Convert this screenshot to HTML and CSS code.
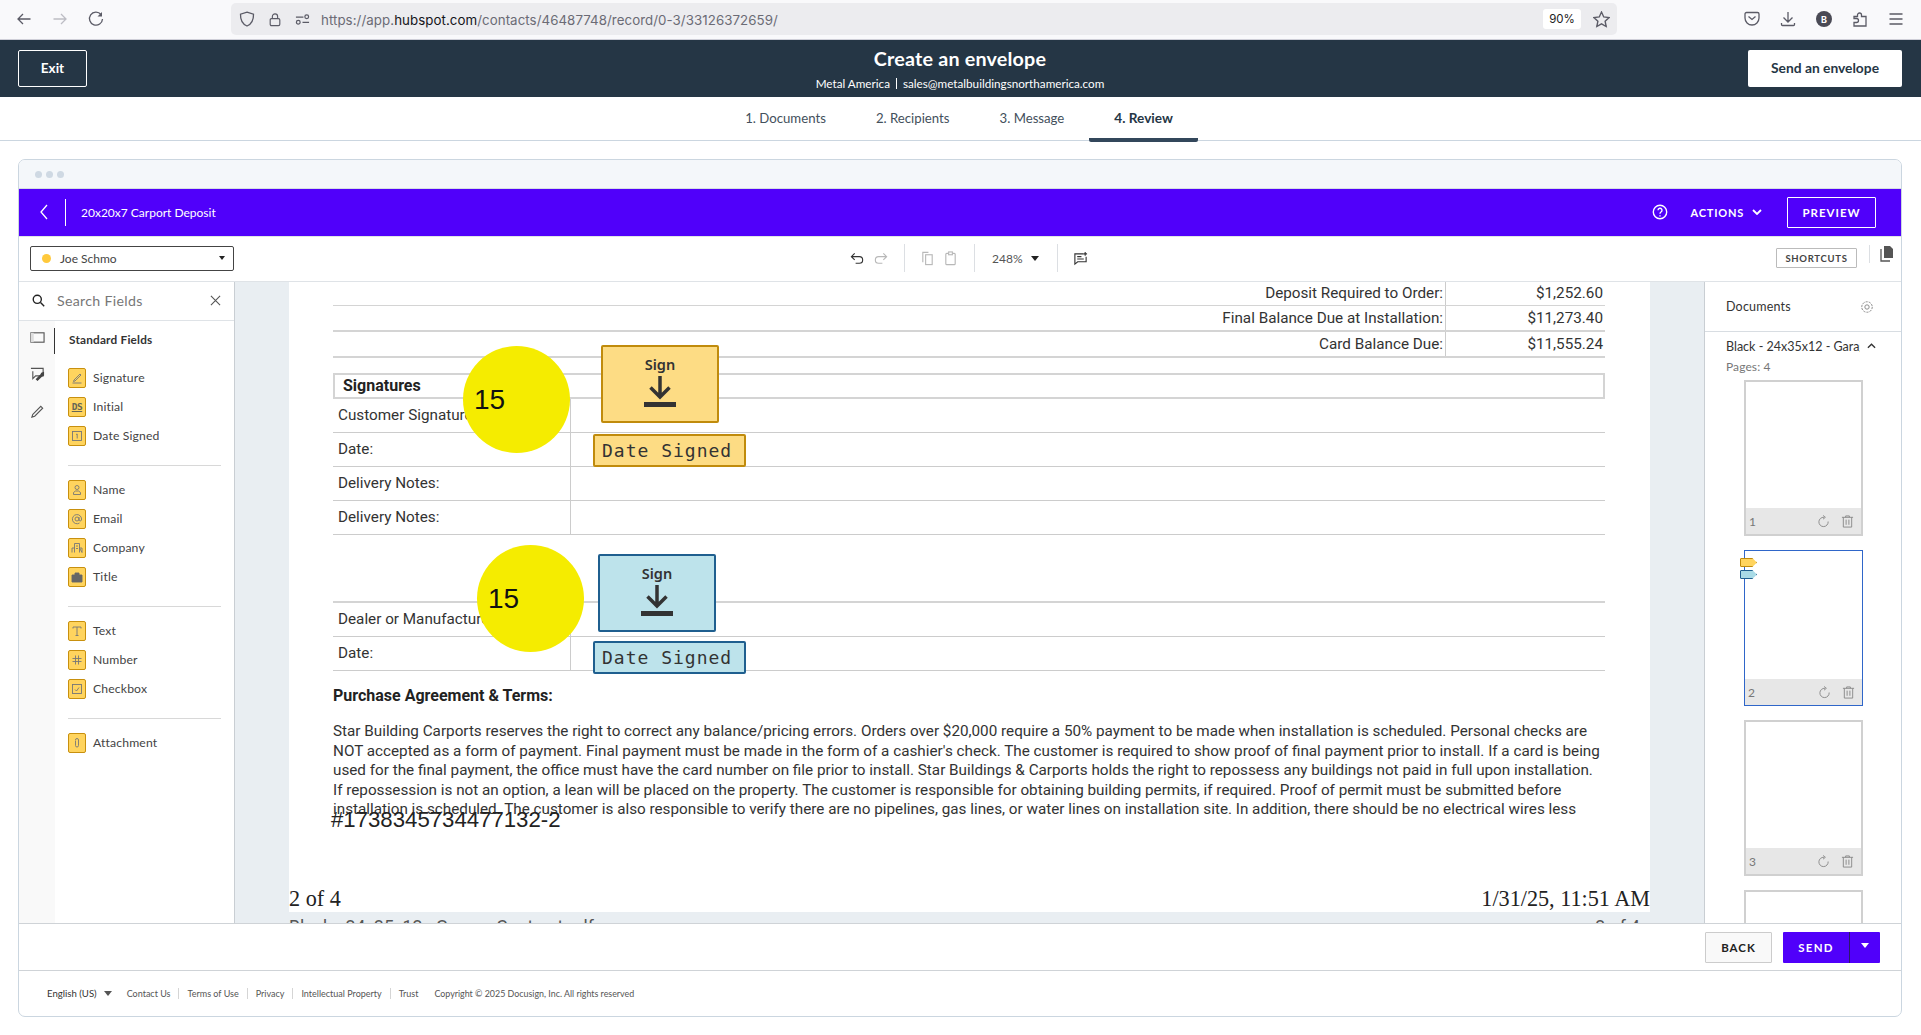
FILE: index.html
```html
<!DOCTYPE html>
<html lang="en">
<head>
<meta charset="utf-8">
<title>Create an envelope</title>
<link rel="stylesheet" href="styles.css">
</head>
<body>
<div class="browser">
  <div class="nav-group">
    <svg class="bi" viewBox="0 0 16 16"><path d="M14.5 8H2M7 3 2 8l5 5"/></svg>
    <svg class="bi dim" viewBox="0 0 16 16"><path d="M1.5 8H14M9 3l5 5-5 5"/></svg>
    <svg class="bi" viewBox="0 0 16 16"><path d="M13 3.5A6.5 6.5 0 1 0 14.5 8"/><path d="M14 1v4.5H9.500z" class="solid"/></svg>
  </div>
  <div class="urlbar">
    <svg class="bi shield" viewBox="0 0 16 16"><path d="M8 1.200 14.500 3.200C14.700 9 12.500 13 8 15 3.500 13 1.300 9 1.500 3.200z"/></svg>
    <svg class="bi lock" viewBox="0 0 16 16"><rect x="2.500" y="7" width="11" height="8" rx="1.500"/><path d="M5 7V4.500a3 3 0 0 1 6 0V7"/></svg>
    <svg class="bi perm" viewBox="0 0 16 16"><path d="M1 5.500h8M8 11h7"/><circle cx="12.500" cy="5" r="2"/><circle cx="3.500" cy="11" r="2"/></svg>
    <div class="url">https://app.<b>hubspot.com</b>/contacts/46487748/record/0-3/33126372659/</div>
    <div class="zoom-pill">90%</div>
    <svg class="bi star" viewBox="0 0 16 16"><path d="m8 1 2.100 4.600 5 .6-3.700 3.400 1 5L8 12.100 3.600 14.600l1-5L.9 6.200l5-.6z"/></svg>
  </div>
  <div class="tool-group">
    <svg class="bi" viewBox="0 0 16 16"><path d="M2.500 1.500h11a1.500 1.500 0 0 1 1.500 1.500v4a7 7 0 0 1-14 0V3a1.500 1.500 0 0 1 1.500-1.500z"/><path d="m4.500 5.500 3.500 3 3.500-3"/></svg>
    <svg class="bi" viewBox="0 0 16 16"><path d="M8 1v10M3.500 6.500 8 11l4.500-4.500M1.500 12v1.500a1 1 0 0 0 1 1h11a1 1 0 0 0 1-1V12"/></svg>
    <div class="avatar">B</div>
    <svg class="bi" viewBox="0 0 16 16"><path d="M2 5.500h3.500V4a2 2 0 0 1 4 0v1.500H14V15H2v-3.500h2.500a2 2 0 0 0 0-4H2z"/></svg>
    <svg class="bi" viewBox="0 0 16 16"><path d="M1.500 3h13M1.500 8h13M1.500 13h13"/></svg>
  </div>
</div>

<header class="app-head">
  <div class="head-left"><button class="exit">Exit</button></div>
  <div class="head-title">
    <h1>Create an envelope</h1>
    <p><span>Metal America</span><i></i><span>sales@metalbuildingsnorthamerica.com</span></p>
  </div>
  <div class="head-right"><button class="send-env">Send an envelope</button></div>
</header>

<nav class="tabs">
  <a class="tab">1. Documents</a>
  <a class="tab">2. Recipients</a>
  <a class="tab">3. Message</a>
  <a class="tab active">4. Review</a>
</nav>

<main class="stage">
  <section class="frame">
    <div class="frame-top"><span></span><span></span><span></span></div>
    <div class="purple">
      <svg class="back" viewBox="0 0 10 18"><path d="M8 2 2 9l6 7"/></svg>
      <div class="doc-title">20x20x7 Carport Deposit</div>
      <svg class="help" viewBox="0 0 16 16"><circle cx="8" cy="8" r="6.700"/><path d="M6 6.300a2 2 0 1 1 3 1.700c-.7.400-1 .9-1 1.700"/><path d="M8 11.200v1.200"/></svg>
      <div class="actions">ACTIONS</div>
      <svg class="act-chev" viewBox="0 0 10 6"><path d="m1 1 4 4 4-4"/></svg>
      <button class="preview">PREVIEW</button>
    </div>
    <div class="toolbar">
      <div class="recipient"><span class="dot"></span><span class="rname">Joe Schmo</span><span class="caret"></span></div>
      <div class="tool-center">
        <svg class="ti" viewBox="0 0 16 16"><path d="M2 6h8a3.500 3.500 0 0 1 0 7H6M5 2.500 1.500 6 5 9.500"/></svg>
        <svg class="ti off" viewBox="0 0 16 16"><path d="M14 6H6a3.500 3.500 0 0 0 0 7h4M11 2.500 14.500 6 11 9.500"/></svg>
        <span class="vsep"></span>
        <svg class="ti off" viewBox="0 0 16 16"><path d="M3 12V1.500h6"/><rect x="6" y="4" width="7" height="10.500"/></svg>
        <svg class="ti off" viewBox="0 0 16 16"><rect x="3" y="2.500" width="10" height="12" rx="1"/><rect x="6" y="1" width="4" height="3" class="solid"/></svg>
        <span class="vsep"></span>
        <span class="zoomval">248%</span><span class="caret small"></span>
        <span class="vsep"></span>
        <svg class="ti" viewBox="0 0 16 16"><path d="M11 3H2v11l3-2.500h9V6M4.500 6H9M4.500 8.500h7"/><path d="M13 1v4M11 3h4"/></svg>
      </div>
      <div class="tool-right">
        <button class="shortcuts">SHORTCUTS</button>
        <span class="vsep short"></span>
        <svg class="docs-ic" viewBox="0 0 16 16"><path d="M6 0h6l3 3v9H6z" class="solid"/><path d="M3 3v12h9"/></svg>
      </div>
    </div>

    <div class="work">
      <aside class="fields">
        <div class="search">
          <svg class="sic" viewBox="0 0 16 16"><circle cx="6.500" cy="6.500" r="5"/><path d="m10.500 10.500 4.500 4.500"/></svg>
          <span class="s-text">Search Fields</span>
          <svg class="xic" viewBox="0 0 12 12"><path d="m1 1 10 10M11 1 1 11"/></svg>
        </div>
        <div class="field-body">
          <div class="rail">
            <svg class="rail-ic" viewBox="0 0 16 16"><rect x="1" y="3" width="14" height="10" class="line"/><rect x="1" y="3" width="3" height="10" class="fillg"/></svg>
            <svg class="rail-ic" viewBox="0 0 16 16"><path d="M1 1.500h13v8H6l-3 3v-8" class="line"/><path d="M15 5l-3 1-1 2-5 5 2 2 5-5 2-1z" class="darkfill"/></svg>
            <svg class="rail-ic" viewBox="0 0 16 16"><path d="M3 11 11.500 2.500l2 2L5 13l-3 1z" class="line"/></svg>
          </div>
          <div class="field-list">
            <div class="field-title">Standard Fields</div>
            <div class="fgroup">
              <div class="frow"><span class="fi"><svg viewBox="0 0 12 12"><path d="M3 8 9 2l1 1-6 6-1.500.5zM1.500 11h9"/></svg></span>Signature</div>
              <div class="frow"><span class="fi ds">DS</span>Initial</div>
              <div class="frow"><span class="fi"><svg viewBox="0 0 12 12"><rect x="1.500" y="1.500" width="9" height="9"/><path d="M5 4.500 6.200 4v4.500"/></svg></span>Date Signed</div>
            </div>
            <div class="fgroup">
              <div class="frow"><span class="fi"><svg viewBox="0 0 12 12"><circle cx="6" cy="3.500" r="2"/><path d="M2.500 10.500V8.500l2-1.500h3l2 1.500v2z"/></svg></span>Name</div>
              <div class="frow"><span class="fi"><svg viewBox="0 0 12 12"><circle cx="6" cy="6" r="2"/><path d="M8 4v3a1.300 1.300 0 0 0 2.500 0A4.600 4.600 0 1 0 8.500 10"/></svg></span>Email</div>
              <div class="frow"><span class="fi"><svg viewBox="0 0 12 12"><path d="M3.500 10.500V1.500h5v9M1 10.500V6h2.500M8.500 6H11v4.500zM5 4h2M5 6.500h2"/></svg></span>Company</div>
              <div class="frow"><span class="fi"><svg viewBox="0 0 12 12"><path d="M1 4h10v7H1zM4 4V2h4v2" class="filled"/></svg></span>Title</div>
            </div>
            <div class="fgroup">
              <div class="frow"><span class="fi"><svg viewBox="0 0 12 12"><path d="M2 3.500V2h8v1.500M6 2v8.500M4.500 10.500h3"/></svg></span>Text</div>
              <div class="frow"><span class="fi"><svg viewBox="0 0 12 12"><path d="M4.500 1.500v9M7.500 1.500v9M1.500 4.500h9M1.500 7.500h9"/></svg></span>Number</div>
              <div class="frow"><span class="fi"><svg viewBox="0 0 12 12"><rect x="1.500" y="1.500" width="9" height="9"/><path d="M4 6.500 5.500 8 8 4.500"/></svg></span>Checkbox</div>
            </div>
            <div class="fgroup last">
              <div class="frow"><span class="fi"><svg viewBox="0 0 12 12"><path d="M4.500 3.500v5a1.500 1.500 0 0 0 3 0V3a1.500 1.500 0 0 0-3 0"/></svg></span>Attachment</div>
            </div>
          </div>
        </div>
      </aside>

      <div class="canvas">
        <article class="page">
          <div class="inner">
            <div class="tot-row first"><span>Deposit Required to Order:</span><span>$1,252.60</span></div>
            <div class="tot-row"><span>Final Balance Due at Installation:</span><span>$11,273.40</span></div>
            <div class="tot-row"><span>Card Balance Due:</span><span>$11,555.24</span></div>
            <div class="sig-head">Signatures</div>
            <div class="sig-row"><span class="lbl">Customer Signature:</span></div>
            <div class="sig-row"><span class="lbl">Date:</span></div>
            <div class="sig-row"><span class="lbl">Delivery Notes:</span></div>
            <div class="sig-row"><span class="lbl">Delivery Notes:</span></div>
            <div class="sig-gap"></div>
            <div class="sig-row"><span class="lbl">Dealer or Manufacturer:</span></div>
            <div class="sig-row"><span class="lbl">Date:</span></div>
            <h3 class="terms-h">Purchase Agreement &amp; Terms:</h3>
            <p class="terms">Star Building Carports reserves the right to correct any balance/pricing errors. Orders over $20,000 require a 50% payment to be made when installation is scheduled. Personal checks are<br>NOT accepted as a form of payment. Final payment must be made in the form of a cashier's check. The customer is required to show proof of final payment prior to install. If a card is being<br>used for the final payment, the office must have the card number on file prior to install. Star Buildings &amp; Carports holds the right to repossess any buildings not paid in full upon installation.<br>If repossession is not an option, a lean will be placed on the property. The customer is responsible for obtaining building permits, if required. Proof of permit must be submitted before<br>installation is scheduled. The customer is also responsible to verify there are no pipelines, gas lines, or water lines on installation site. In addition, there should be no electrical wires less</p>
          </div>
          <div class="page-foot"><span>2 of 4</span><span>1/31/25, 11:51 AM</span></div>

          <div class="stamp">#1738345734477132-2</div>
          <div class="pin pin-a"><span>15</span></div>
          <div class="pin pin-b"><span>15</span></div>
          <div class="tag sign sign-a yellow"><span>Sign</span><svg viewBox="0 0 32 32"><path d="M16 1v20M6.500 12.500 16 22l9.500-9.500" class="arrow"/><path d="M0 29.500h32" class="arrow bar"/></svg></div>
          <div class="tag date date-a yellow">Date Signed</div>
          <div class="tag sign sign-b blue"><span>Sign</span><svg viewBox="0 0 32 32"><path d="M16 1v20M6.500 12.500 16 22l9.500-9.500" class="arrow"/><path d="M0 29.500h32" class="arrow bar"/></svg></div>
          <div class="tag date date-b blue">Date Signed</div>
        </article>
        <div class="next-page"><span>Black - 24x35x12 - Garage Contract.pdf</span><span>2 of 4</span></div>
      </div>

      <aside class="docs">
        <div class="docs-head"><span>Documents</span>
          <svg class="gear" viewBox="0 0 16 16"><circle cx="8" cy="8" r="2.500"/><circle cx="8" cy="8" r="6" stroke-dasharray="2.500 1.200"/></svg>
        </div>
        <div class="docs-body">
          <div class="doc-name"><span class="clip">Black - 24x35x12 - Garage Carport</span><svg class="up" viewBox="0 0 10 6"><path d="m1 5 4-4 4 4"/></svg></div>
          <div class="pages">Pages: 4</div>
          <div class="thumbs">
            <div class="thumb"><div class="t-sheet"></div><div class="t-foot"><span>1</span><svg class="rot" viewBox="0 0 14 14"><path d="M7.500 2.500A5 5 0 1 0 12 7"/><path d="m6.500.5 2.500 2-2.500 2"/></svg><svg class="bin" viewBox="0 0 14 14"><path d="M1 2.500h12M5 2.500V1h4v1.500M2.500 2.500V13h9V2.500M5.500 5v5.500M8.500 5v5.500"/></svg></div></div>
            <div class="thumb current"><div class="t-sheet"></div><div class="t-foot"><span>2</span><svg class="rot" viewBox="0 0 14 14"><path d="M7.500 2.500A5 5 0 1 0 12 7"/><path d="m6.500.5 2.500 2-2.500 2"/></svg><svg class="bin" viewBox="0 0 14 14"><path d="M1 2.500h12M5 2.500V1h4v1.500M2.500 2.500V13h9V2.500M5.500 5v5.500M8.500 5v5.500"/></svg></div>
              <span class="mark mark-y"></span><span class="mark mark-b"></span></div>
            <div class="thumb"><div class="t-sheet"></div><div class="t-foot"><span>3</span><svg class="rot" viewBox="0 0 14 14"><path d="M7.500 2.500A5 5 0 1 0 12 7"/><path d="m6.500.5 2.500 2-2.500 2"/></svg><svg class="bin" viewBox="0 0 14 14"><path d="M1 2.500h12M5 2.500V1h4v1.500M2.500 2.500V13h9V2.500M5.500 5v5.500M8.500 5v5.500"/></svg></div></div>
            <div class="thumb"><div class="t-sheet"></div></div>
          </div>
        </div>
      </aside>
    </div>

    <div class="actions-bar">
      <button class="btn-back">BACK</button>
      <div class="btn-send"><span class="send-l">SEND</span><span class="send-r"><span class="caret white"></span></span></div>
    </div>
    <footer class="legal">
      <span class="lang">English (US)</span><span class="caret tiny"></span>
      <a class="first-link">Contact Us</a><a>Terms of Use</a><a>Privacy</a><a>Intellectual Property</a><a class="plain">Trust</a>
      <span class="copy">Copyright © 2025 Docusign, Inc. All rights reserved</span>
    </footer>
  </section>
</main>
</body>
</html>
```

FILE: styles.css
```css
* { box-sizing: border-box; }
html, body { margin: 0; padding: 0; }
body {
  width: 1921px;
  height: 1035px;
  overflow: hidden;
  background: #fff;
  font-family: Lato, "Noto Sans", sans-serif;
  color: #333;
}
button { font-family: inherit; cursor: pointer; }

/* Browser chrome */
.browser {
  height: 40px;
  display: flex;
  align-items: center;
  background: #f9f9fb;
  border-bottom: 1px solid #cfcfd8;
  padding-bottom: 1px;
}
.bi { width: 16px; height: 16px; fill: none; stroke: #5b5b66; stroke-width: 1.300; flex: none; }
.bi .solid { fill: #5b5b66; stroke: none; }
.bi.dim { stroke: #bdbdc4; }
.nav-group { display: flex; gap: 20px; width: 231px; padding-left: 16px; }
.urlbar {
  width: 1386px;
  height: 32px;
  background: #ececef;
  border-radius: 5px;
  display: flex;
  align-items: center;
  padding-left: 8px;
}
.shield { width: 16px; height: 18px; }
.lock { width: 14px; height: 17px; margin-left: 13px; }
.perm { width: 15px; height: 15px; margin-left: 13px; }
.url { font-family: Inter, sans-serif; font-size: 13.300px; color: #6b6b75; margin-left: 11px; white-space: nowrap; flex: 1; letter-spacing: 0.060px; padding-top: 1px; }
.url b { font-weight: 400; color: #15141a; }
.zoom-pill { width: 38px; height: 20px; background: #fff; border-radius: 3px; font-family: Inter, sans-serif; font-size: 11.500px; color: #222; display: flex; align-items: center; justify-content: center; }
.star { width: 17px; height: 17px; margin: 0 7px 0 12px; }
.tool-group { display: flex; align-items: center; gap: 20px; padding-left: 127px; }
.avatar { width: 16px; height: 16px; border-radius: 50%; background: #4a4a55; color: #fff; font: 700 9px Inter, sans-serif; display: flex; align-items: center; justify-content: center; }

/* App header */
.app-head {
  height: 57px;
  background: #253645;
  display: grid;
  grid-template-columns: 1fr auto 1fr;
  align-items: center;
  padding: 0 19px 0 18px;
  color: #fff;
}
.head-right { display: flex; justify-content: flex-end; }
.exit { width: 69px; height: 37px; background: transparent; border: 1px solid #fff; border-radius: 2px; color: #fff; font-size: 13.500px; font-weight: 700; padding: 0 0 2px; }
.head-title { text-align: center; }
.head-title h1 { margin: 0; font-size: 19.700px; font-weight: 700; line-height: 24px; letter-spacing: 0.200px; }
.head-title p { margin: 5px 0 0; font-size: 11.700px; line-height: 14px; display: flex; justify-content: center; align-items: center; gap: 6px; }
.head-title i { width: 1px; height: 11px; background: #fff; }
.send-env { width: 154px; height: 37px; background: #fff; border: 0; border-radius: 2px; color: #253645; font-size: 13.800px; font-weight: 700; padding: 0 0 2px; }

/* Step tabs */
.tabs { height: 44px; display: flex; justify-content: center; border-bottom: 1px solid #cbd6e0; padding-right: 3px; }
.tab { padding: 0 25px; line-height: 43px; height: 45px; font-size: 13.200px; color: #43505c; white-space: nowrap; }
.tab.active { color: #253645; font-weight: 700; font-size: 13.600px; border-bottom: 4px solid #33475b; border-radius: 0 0 2px 2px; }

/* Frame */
.stage { padding: 18px 19px 0 18px; }
.frame { height: 858px; border: 1px solid #cbd6e0; border-radius: 7px; display: flex; flex-direction: column; overflow: hidden; }
.frame-top { height: 29px; background: #f4f7fa; border-bottom: 1px solid #d5dde4; display: flex; align-items: center; gap: 4px; padding: 1px 0 0 16px; flex: none; }
.frame-top span { width: 7px; height: 7px; border-radius: 50%; background: #cfd9e3; }
.purple { height: 48px; flex: none; background: #5000fa; color: #fff; display: flex; align-items: center; border-bottom: 1px solid #dfe3e7; padding-bottom: 1px; }
.back { width: 10px; height: 18px; margin-left: 20px; fill: none; stroke: #fff; stroke-width: 1.300; }
.doc-title { margin-left: 16px; padding-left: 15px; border-left: 1px solid #fff; height: 27px; line-height: 27px; font-size: 12px; flex: 1; }
.help { width: 16px; height: 16px; fill: none; stroke: #fff; stroke-width: 1.400; }
.actions { font-size: 11px; font-weight: 700; letter-spacing: 0.800px; margin-left: 22px; }
.act-chev { width: 10px; height: 6px; margin-left: 8px; fill: none; stroke: #fff; stroke-width: 1.800; }
.preview { width: 89px; height: 31px; margin: 0 25px 0 25px; background: transparent; border: 1px solid #fff; border-radius: 1px; color: #fff; font-size: 11.500px; font-weight: 700; letter-spacing: 1px; }

.toolbar { height: 45px; flex: none; display: flex; align-items: center; border-bottom: 1px solid #dfe3e7; padding-bottom: 2px; }
.recipient { width: 204px; height: 25px; margin-left: 11px; border: 1px solid #444; border-radius: 2px; display: flex; align-items: center; padding: 0 8px 0 11px; font-size: 12px; color: #444; flex: none; }
.dot { width: 9px; height: 9px; border-radius: 50%; background: #ffc93c; margin-right: 9px; }
.rname { flex: 1; }
.caret { width: 0; height: 0; border-left: 4px solid transparent; border-right: 4px solid transparent; border-top: 5px solid #222; }
.recipient .caret { border-left-width: 3.500px; border-right-width: 3.500px; border-top-width: 4px; }
.tool-center { display: flex; align-items: center; margin-left: 616px; flex: none; }
.ti { width: 15px; height: 15px; fill: none; stroke: #333; stroke-width: 1.200; flex: none; margin-right: 8px; }
.ti .solid { fill: #fff; }
.ti.off { stroke: #b8b8b8; }
.vsep { width: 1px; height: 28px; background: #dcdfe3; margin: 0 15px 0 8px; flex: none; }
.zoomval { font-size: 12px; color: #555; width: 30px; margin: 0 3px 0 2px; }
.caret.small { margin: 0 10px 0 6px; }
.tool-right { display: flex; align-items: center; margin-left: auto; padding-right: 7px; }
.shortcuts { width: 81px; height: 20px; background: #fff; border: 1px solid #bbb; border-radius: 1px; font-size: 9.500px; font-weight: 700; letter-spacing: 0.700px; color: #444; padding: 0; }
.vsep.short { height: 18px; margin: -8px 8px 0 12px; }
.docs-ic { width: 16px; height: 16px; margin-top: -8px; fill: none; stroke: #555; stroke-width: 1.300; }
.docs-ic .solid { fill: #555; stroke: none; }

/* Work area */
.work { flex: 1; min-height: 0; display: flex; }
.fields { width: 216px; flex: none; border-right: 1px solid #c9ced3; display: flex; flex-direction: column; background: #fff; }
.search { height: 39px; flex: none; display: flex; align-items: center; padding: 0 13px 2px 13px; border-bottom: 1px solid #dfe3e7; }
.sic { width: 13px; height: 13px; fill: none; stroke: #222; stroke-width: 1.700; }
.s-text { flex: 1; margin-left: 12px; font-size: 14.200px; color: #777; letter-spacing: 0.300px; }
.xic { width: 11px; height: 11px; fill: none; stroke: #555; stroke-width: 1.200; }
.field-body { flex: 1; display: flex; min-height: 0; }
.rail { width: 36px; flex: none; background: #f9f9f9; display: flex; flex-direction: column; align-items: center; gap: 22px; padding-top: 9px; }
.rail-ic { width: 15px; height: 15px; fill: none; }
.rail-ic .line { stroke: #555; stroke-width: 1.200; fill: none; }
.rail-ic .fillg { fill: #ddd; }
.rail-ic .darkfill { fill: #444; }
.field-list { flex: 1; padding: 0 13px 0 13px; position: relative; }
.field-list::before { content: ""; position: absolute; left: -1px; top: 7px; width: 1px; height: 26px; background: #333; }
.field-title { height: 42px; padding: 11px 0 0 1px; font-size: 11.800px; font-weight: 700; color: #333; line-height: 16px; letter-spacing: 0.200px; }
.fgroup { padding: 0 0 15px; margin-bottom: 9px; border-bottom: 1px solid #d8d8d8; }
.fgroup.last { border-bottom: 0; }
.frow { height: 29px; display: flex; align-items: center; font-size: 12.200px; color: #444; letter-spacing: 0.150px; }
.fi { width: 18px; height: 20px; margin-right: 7px; background: #ffd45e; border: 1px solid #c8900e; border-radius: 2px; display: flex; align-items: center; justify-content: center; flex: none; }
.fi svg { width: 12px; height: 12px; fill: none; stroke: #777; stroke-width: 0.900; }
.fi svg .filled { fill: #666; stroke: #666; }
.fi.ds { font: 700 9.500px "DejaVu Sans Mono", monospace; color: #665; text-decoration: underline; letter-spacing: -0.500px; }

/* Canvas and page */
.canvas { flex: 1; min-width: 0; background: #e9eef2; padding-left: 54px; overflow: hidden; }
.page { width: 1361px; height: 630px; background: #fff; position: relative; display: flex; flex-direction: column; font-family: Roboto, sans-serif; color: #333; }
.inner { margin: 0 45px 0 44px; flex: 1; min-height: 0; }
.tot-row { height: 26px; display: grid; grid-template-columns: 1113px 1fr; border-bottom: 2px solid #d4d4d4; font-size: 15.250px; line-height: 24px; }
.tot-row.first { height: 24px; border-bottom-width: 1px; line-height: 22px; }
.tot-row span:first-child { text-align: right; padding-right: 2px; border-right: 1px solid #ccc; }
.tot-row span:last-child { text-align: right; padding-right: 2px; }
.sig-head { height: 26px; margin-top: 15px; border: 2px solid #d4d4d4; padding-left: 8px; font-size: 16px; font-weight: 700; line-height: 21px; color: #222; }
.sig-row { height: 34px; border-bottom: 1px solid #ccc; font-size: 15.250px; line-height: 33px; }
.lbl { display: block; width: 238px; height: 100%; padding-left: 5px; border-right: 1px solid #ccc; white-space: nowrap; overflow: hidden; }
.sig-gap { height: 68px; border-bottom: 2px solid #d4d4d4; }
.terms-h { margin: 15px 0 0; font-size: 16px; font-weight: 700; line-height: 20px; color: #222; }
.terms { margin: 16px 0 0; font-size: 15.260px; line-height: 19.500px; white-space: nowrap; color: #333; }
.page-foot { height: 27px; display: flex; justify-content: space-between; font-family: "Liberation Serif", serif; font-size: 22.200px; line-height: 28px; color: #222; flex: none; }
.stamp { position: absolute; left: 42px; top: 526px; font-family: "Liberation Sans", sans-serif; font-size: 22.200px; line-height: 24px; color: #222; }
.pin { position: absolute; width: 107px; height: 107px; border-radius: 50%; background: #f5ec00; font-family: "Liberation Sans", sans-serif; font-size: 28px; color: #111; display: flex; align-items: center; padding-left: 11px; }
.pin-a { left: 174px; top: 64px; }
.pin-b { left: 188px; top: 263px; }
.tag { position: absolute; border: 2px solid; border-radius: 2px; color: #333; font-family: "DejaVu Sans Mono", monospace; }
.yellow { background: #fddc84; border-color: #c08b0c; }
.blue { background: #bde3eb; border-color: #1f5f8f; }
.sign { width: 118px; height: 78px; display: flex; flex-direction: column; align-items: center; padding-top: 8px; font-family: "Noto Sans", sans-serif; font-size: 14.500px; font-weight: 600; line-height: 18px; }
.sign svg { width: 32px; height: 32px; margin-top: 2px; fill: none; }
.arrow { stroke: #333; stroke-width: 3.500; fill: none; }
.arrow.bar { stroke-width: 5; }
.sign-a { left: 312px; top: 63px; }
.sign-b { left: 309px; top: 272px; }
.date { width: 153px; height: 33px; padding-left: 7px; font-size: 18px; letter-spacing: 1px; line-height: 29px; white-space: nowrap; }
.date-a { left: 304px; top: 152px; }
.date-b { left: 304px; top: 359px; }
.next-page { width: 1361px; display: flex; justify-content: space-between; padding: 0 10px 0 0; font-family: Roboto, sans-serif; font-size: 17.600px; line-height: 20px; margin-top: 5px; color: #555; white-space: nowrap; }

/* Right documents rail */
.docs { width: 197px; flex: none; border-left: 1px solid #c9ced3; display: flex; flex-direction: column; min-height: 0; overflow: hidden; }
.docs-head { height: 50px; flex: none; display: flex; align-items: center; justify-content: space-between; padding: 0 27px 0 21px; border-bottom: 1px solid #d8dde2; font-size: 12.500px; color: #333; letter-spacing: 0.200px; }
.gear { width: 14px; height: 14px; fill: none; stroke: #888; stroke-width: 1.100; }
.docs-body { padding-top: 5px; flex: 1; min-height: 0; overflow: hidden; }
.doc-name { display: flex; align-items: center; padding-left: 21px; height: 18px; font-size: 12.500px; color: #333; }
.clip { width: 134px; white-space: nowrap; overflow: hidden; }
.up { width: 9px; height: 6px; margin-left: 7px; fill: none; stroke: #333; stroke-width: 1.500; }
.pages { padding-left: 21px; height: 25px; line-height: 23px; font-size: 12px; color: #777; letter-spacing: 0.100px; }
.thumbs { display: flex; flex-direction: column; gap: 14px; padding: 0 0 0 39px; }
.thumb { width: 119px; height: 156px; border: 2px solid #d0d0d0; position: relative; flex: none; display: flex; flex-direction: column; background: #fff; }
.thumb.current { border: 1.500px solid #2f66c9; }
.t-sheet { flex: 1; }
.t-foot { height: 26px; background: #e7e7e7; display: flex; align-items: center; padding: 0 7px 0 3px; font-size: 12px; color: #777; }
.t-foot span { flex: 1; }
.rot, .bin { width: 13px; height: 13px; fill: none; stroke: #888; stroke-width: 1; }
.rot { margin-right: 11px; }
.mark { position: absolute; left: -5px; width: 17px; height: 9px; border: 1px solid; clip-path: polygon(0 0, 72% 0, 100% 50%, 72% 100%, 0 100%); border-radius: 1px; }
.mark-y { top: 7px; background: #ffd45e; border-color: #c08b0c; }
.mark-b { top: 19px; background: #a9dbe6; border-color: #1f5f8f; }

/* Action bar and legal footer */
.actions-bar { height: 47px; flex: none; display: flex; align-items: center; justify-content: flex-end; padding: 0 21px 0 0; border-top: 1px solid #cfd3d7; gap: 11px; }
.btn-back { width: 67px; height: 31px; background: #f9f9f9; border: 1px solid #ccc; border-radius: 1px; font-size: 11.500px; font-weight: 700; letter-spacing: 1px; color: #222; padding: 0; }
.btn-send { width: 97px; height: 31px; background: #5000fa; border-radius: 1px; color: #fff; display: flex; font-size: 11.500px; font-weight: 700; letter-spacing: 1.200px; }
.send-l { width: 67px; display: flex; align-items: center; justify-content: center; border-right: 1px solid #2b1a66; }
.send-r { flex: 1; display: flex; align-items: center; justify-content: center; padding-bottom: 3px; }
.caret.white { border-top-color: #fff; }
.legal { height: 46px; flex: none; border-top: 1px solid #cfd3d7; display: flex; align-items: center; padding-left: 28px; font-size: 9px; color: #555; white-space: nowrap; }
.lang { color: #333; font-size: 9.600px; }
.caret.tiny { margin: 0 8px 0 7px; border-top-color: #555; }
.legal a { padding: 0 8px; border-right: 1px solid #d5d5d5; line-height: 11px; }
.legal a.first-link { padding-left: 7px; }
.legal a.plain { border-right: 0; }
.copy { margin-left: 8px; font-size: 8.900px; }
```
